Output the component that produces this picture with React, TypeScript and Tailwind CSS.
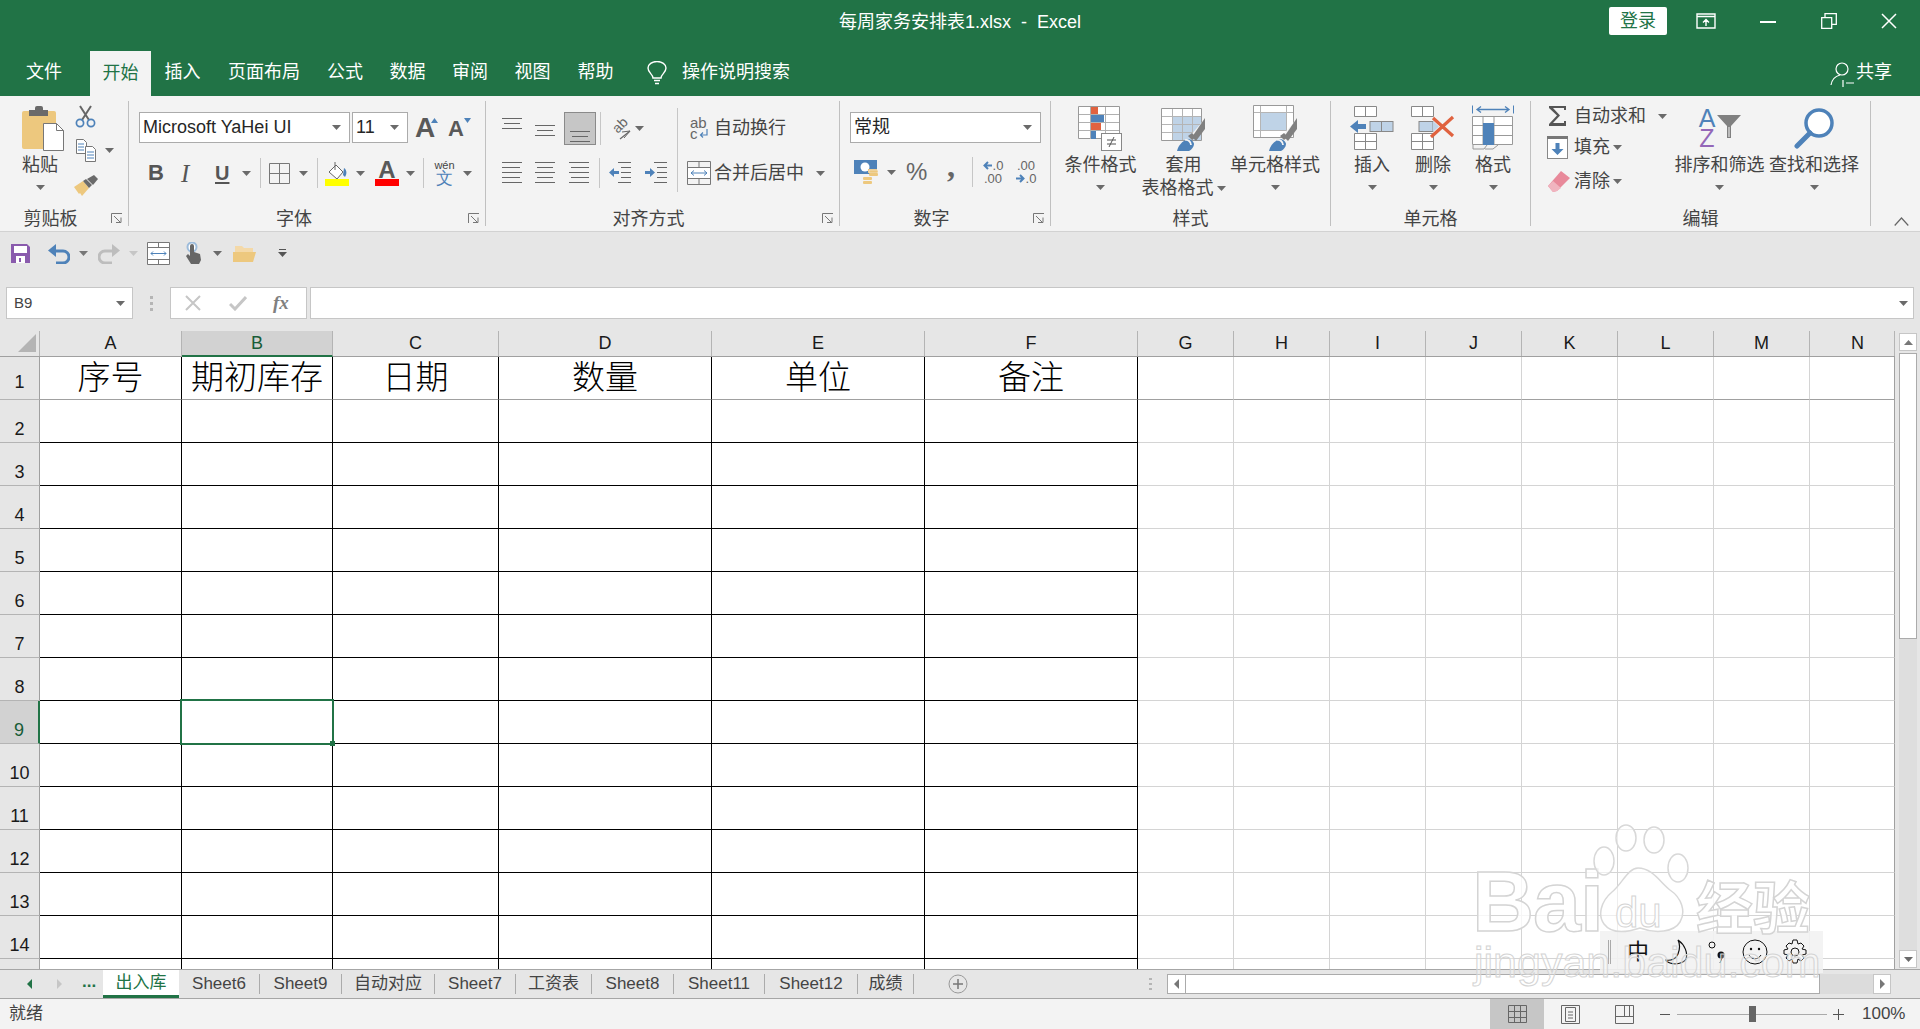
import React from 'react';

const S = ({ w, h, children, className = '' }: { w: number; h: number; children?: React.ReactNode; className?: string }) => (
  <svg width={w} height={h} viewBox={`0 0 ${w} ${h}`} className={`block shrink-0 ${className}`}>
    {children}
  </svg>
);

const Caret = ({ className = '' }: { className?: string }) => (
  <S w={9} h={5} className={className}>
    <path d="M0 0h9L4.5 5z" fill="#6a6a6a" />
  </S>
);

const Launcher = () => (
  <S w={12} h={11} className="absolute right-[5px] bottom-[2px]">
    <path d="M.5 10V.5H11M3 3l6 6M5 9.5h5v-5" fill="none" stroke="#777" />
  </S>
);

const Group = ({ className, label, lp = '', launcher = false, children }: { className: string; label: string; lp?: string; launcher?: boolean; children: React.ReactNode }) => (
  <div className={`relative flex h-[125px] shrink-0 flex-col border-r border-[#c0c0c0] ${className}`}>
    <div className="flex h-[105px]">{children}</div>
    <div className={`h-[20px] text-center text-[18px] leading-[26px] ${lp}`}>{label}</div>
    {launcher && <Launcher />}
  </div>
);

const Big = ({ className, icon, lines, inlineCaret = false }: { className: string; icon: React.ReactNode; lines: string[]; inlineCaret?: boolean }) => (
  <div className={`flex shrink-0 flex-col items-center pt-[5px] ${className}`}>
    <div className="flex h-[44px] items-center">{icon}</div>
    <div className="mt-[4px] whitespace-nowrap text-center text-[18px] leading-[23px]">
      {lines.map(l => (
        <div key={l} className="flex items-center justify-center gap-[3px]">
          {l}
          {inlineCaret && lines.length > 1 && l === lines[1] && <Caret />}
        </div>
      ))}
    </div>
    {!inlineCaret && <Caret className="mt-[8px]" />}
  </div>
);

const Combo = ({ className, text }: { className: string; text: string }) => (
  <div className={`flex h-[31px] shrink-0 items-center justify-between border border-[#ababab] bg-white pl-[3px] pr-[8px] text-[18px] text-[#262626] ${className}`}>
    <span className="whitespace-nowrap">{text}</span>
    <Caret />
  </div>
);

const VSep = ({ className = '' }: { className?: string }) => <div className={`w-px shrink-0 bg-[#c6c6c6] ${className}`} />;

const Lines = ({ rows, y0, step, x0 = 0, w = 20, h = 28 }: { rows: number[]; y0: number; step: number; x0?: number; w?: number; h?: number }) => (
  <S w={w} h={h}>
    {rows.map((r, i) => {
      const x = x0 === -1 ? (w - r) / 2 : x0 === -2 ? w - r : x0;
      return <rect key={i} x={x} y={y0 + i * step} width={r} height={1} fill="#666" />;
    })}
  </S>
);

const PasteIcon = () => (
  <S w={43} h={45} className="ml-[6px]">
    <rect x="0" y="5" width="34" height="38" rx="2" fill="#edc87e" />
    <rect x="7" y="4" width="19" height="6" fill="#6a6a6a" />
    <rect x="13" y="0" width="8" height="7" rx="2" fill="#6a6a6a" />
    <path d="M21.500 17.500h13l7 7v20h-20z" fill="#fff" stroke="#777" />
    <path d="M34.500 17.500v7h7" fill="none" stroke="#777" />
  </S>
);
const CutIcon = () => (
  <S w={21} h={23}>
    <path d="M7 15L16 1M14 15L5 1" stroke="#666" strokeWidth="2" />
    <circle cx="5" cy="18" r="3.600" fill="none" stroke="#4e82b9" strokeWidth="1.700" />
    <circle cx="16" cy="18" r="3.600" fill="none" stroke="#4e82b9" strokeWidth="1.700" />
  </S>
);
const CopyIcon = () => (
  <S w={20} h={23}>
    <path d="M.5.5h7l3 3v11H.5z" fill="#fff" stroke="#777" />
    <path d="M2 5h6M2 8h6M2 11h6" stroke="#4e82b9" />
    <path d="M9.500 7.500h7l3 3v12h-10z" fill="#fff" stroke="#777" />
    <path d="M11 13h7M11 16h7M11 19h7" stroke="#4e82b9" />
  </S>
);
const BrushIcon = () => (
  <S w={24} h={21}>
    <path d="M0 12l9-6 6 7-7 8-2-3-1 1z" fill="#edc87e" />
    <path d="M9 6l3-2 6 6-3 3z" fill="#6a6a6a" />
    <path d="M13 4l7-4 4 4-5 6z" fill="#6a6a6a" />
  </S>
);
const BorderIcon = () => (
  <S w={21} h={21}>
    <path d="M.5.5h20v20H.5zM10.500 1v19M1 10.500h19" fill="none" stroke="#777" />
  </S>
);
const FillIcon = () => (
  <S w={24} h={25}>
    <path d="M4 11l7-7 7 7-6 7z" fill="#fff" stroke="#666" />
    <path d="M10 1v8" stroke="#666" />
    <path d="M19 7c3 2 3 6 1 9l-2-2z" fill="#4e82b9" />
    <rect x="0" y="18" width="24" height="7" fill="#ffff00" />
  </S>
);
const FontColorIcon = () => (
  <div className="flex w-[24px] shrink-0 flex-col items-center">
    <span className="h-[18px] font-['Liberation_Sans'] text-[24px] font-bold leading-[20px] text-[#595959]">A</span>
    <div className="mt-[1px] h-[7px] w-[24px] bg-[#ff0000]" />
  </div>
);
const WenIcon = () => (
  <div className="flex w-[21px] shrink-0 flex-col items-center leading-none">
    <span className="text-[11px] text-[#444]">wén</span>
    <span className="mt-[-1px] text-[17px] text-[#4e82b9]">文</span>
  </div>
);
const OrientIcon = () => (
  <div className="relative h-[24px] w-[21px] shrink-0">
    <span className="absolute left-[1px] top-[0px] -rotate-45 font-['Liberation_Sans'] text-[14px] leading-[16px] text-[#666]">ab</span>
    <S w={21} h={24}>
      <path d="M9 22l10-8" stroke="#666" strokeWidth="1.300" />
      <path d="M13 21l6-7-8 1" fill="none" stroke="#666" />
    </S>
  </div>
);
const IndentDec = () => (
  <S w={22} h={22}>
    <path d="M9 .5h13M12 5.500h10M12 10.500h10M12 15.500h10M9 20.500h13" stroke="#666" />
    <path d="M0 10.500L5 6v3h5v3H5v3z" fill="#4e82b9" />
  </S>
);
const IndentInc = () => (
  <S w={22} h={22}>
    <path d="M9 .5h13M12 5.500h10M12 10.500h10M12 15.500h10M9 20.500h13" stroke="#666" />
    <path d="M10 10.500L5 6v3H0v3h5v3z" fill="#4e82b9" />
  </S>
);
const WrapIcon = () => (
  <div className="flex w-[18px] shrink-0 flex-col font-['Liberation_Sans'] text-[15px] leading-[11px] text-[#666]">
    <span>ab</span>
    <span className="flex items-center">
      c
      <S w={9} h={9} className="ml-[1px]">
        <path d="M8 0v6H2M4 3.500L1.500 6 4 8.500" fill="none" stroke="#4e82b9" strokeWidth="1.200" />
      </S>
    </span>
  </div>
);
const MergeIcon = () => (
  <S w={24} h={24}>
    <path d="M.5.5h23v23H.5zM1 6.500h22M1 17.500h22M12 1v5M12 18v5" fill="none" stroke="#777" />
    <rect x="1" y="7" width="22" height="10" fill="#fff" />
    <path d="M4 12h16M7 9.500L4 12l3 2.500M17 9.500l3 2.500-3 2.500" fill="none" stroke="#4e82b9" />
  </S>
);
const AccountIcon = () => (
  <S w={25} h={24}>
    <rect x="0" y="0" width="23" height="14" fill="#4e82b9" />
    <circle cx="11" cy="7" r="4.500" fill="#fff" />
    <rect x="14" y="9" width="9" height="4" fill="#e9c47f" />
    <rect x="15" y="10" width="9" height="3" rx="1" fill="#edc87e" stroke="#f3f3f3" strokeWidth=".5" />
    <rect x="15" y="13" width="9" height="3" rx="1" fill="#edc87e" />
    <rect x="9" y="17" width="9" height="3" rx="1" fill="#edc87e" />
    <rect x="9" y="21" width="9" height="3" rx="1" fill="#edc87e" />
  </S>
);
const DecArrow = ({ dir }: { dir: 'l' | 'r' }) => (
  <S w={9} h={9} className="mr-[1px]">
    <path d={dir === 'l' ? 'M9 4.500H2M5 1L1.500 4.500 5 8' : 'M0 4.500h7M4 1l3.500 3.500L4 8'} fill="none" stroke="#4e82b9" strokeWidth="2" />
  </S>
);
const CondIcon = () => (
  <S w={46} h={45}>
    <path d="M.5.5h41v32H.5z" fill="#fff" stroke="#999" />
    <rect x="12" y="1" width="8" height="8" fill="#e0623f" />
    <rect x="12" y="9" width="14" height="8" fill="#4e82b9" />
    <rect x="12" y="17" width="11" height="8" fill="#e0623f" />
    <rect x="12" y="25" width="6" height="8" fill="#4e82b9" />
    <path d="M12.500 1v32M27.500 1v32M1 8.500h40M1 16.500h40M1 24.500h40" stroke="#b0b0b0" fill="none" />
    <rect x="23.500" y="27.500" width="20" height="17" fill="#fff" stroke="#888" />
    <path d="M29 34h9M29 38h9M31 41l5-10" stroke="#555" fill="none" />
  </S>
);
const BrushOverlay = () => (
  <>
    <path d="M29 31l3 3 12-20v-1l-2 3z" fill="#f3f3f3" />
    <path d="M31 32l4 4 9-12V13z" fill="#808080" />
    <path d="M27 31l4-3 4 4-4 3z" fill="#808080" />
    <path d="M16 46c1-5 5-10 11-12 3 0 6 3 6 5 0 3-3 6-5 7z" fill="#4e82b9" />
    <path d="M24 35c3-1 6 2 6 5" fill="none" stroke="#f3f3f3" strokeWidth="1.800" />
  </>
);
const TableIcon = () => (
  <S w={45} h={46}>
    <path d="M.5 3.500h40v32H.5z" fill="#fff" stroke="#999" />
    <rect x="11" y="11" width="29" height="24" fill="#bfd3e7" />
    <path d="M11.500 4v31M21.500 4v31M31.500 4v31M1 11.500h39M1 19.500h39M1 27.500h39" stroke="#b5b5b5" fill="none" />
    <BrushOverlay />
  </S>
);
const CellStyleIcon = () => (
  <S w={45} h={46}>
    <path d="M.5.5h40v32H.5z" fill="#fff" stroke="#999" />
    <rect x="8" y="8" width="25" height="17" fill="#bfd3e7" />
    <path d="M7.500 1v31M33.500 1v31M1 7.500h39M1 25.500h39" stroke="#b5b5b5" fill="none" />
    <BrushOverlay />
  </S>
);
const InsertIcon = () => (
  <S w={44} h={44}>
    <path d="M4.500.5h22v10h-22zM15.500 1v9M4.500 27.500h22v16h-22zM15.500 28v15M5 35.500h21" fill="#fff" stroke="#888" />
    <rect x="20" y="15.500" width="23" height="10" fill="#bfd3e7" stroke="#888" />
    <path d="M31.500 16v9" stroke="#888" />
    <path d="M0 20.500L8 14v4h8v5H8v4z" fill="#4e82b9" />
  </S>
);
const DeleteIcon = () => (
  <S w={44} h={44}>
    <path d="M.5.5h22v10H.5zM11.500 1v9M.5 27.500h22v16H.5zM11.500 28v15M1 35.500h21" fill="#fff" stroke="#888" />
    <rect x="8" y="15.500" width="14" height="10" fill="#bfd3e7" stroke="#888" />
    <path d="M22 15l6 5.500-6 5.500z" fill="#bfd3e7" />
    <path d="M22 12l20 18M42 11L20 31" stroke="#e0623f" strokeWidth="3.200" />
  </S>
);
const FormatIcon = () => (
  <S w={42} h={46}>
    <path d="M.5.500v8M41.500.500v8" stroke="#4e82b9" />
    <path d="M5 4.500h32M9 1.500L5 4.500l4 3M33 1.500l4 3-4 3" fill="none" stroke="#4e82b9" strokeWidth="1.300" />
    <path d="M.5 11.500h40v28H.5zM11 12v28M22 12v28M1 20.500h39M1 30.500h39" fill="#fff" stroke="#999" />
    <rect x="11" y="18" width="11" height="22" fill="#4e82b9" />
    <path d="M1 40v4h11l3-4M13 44h8l5-4" fill="none" stroke="#999" />
  </S>
);
const SigmaIcon = () => (
  <S w={18} h={20}>
    <path d="M0 0h17v4h-2V2H4l7 7.500L4 17h11v-2h2v5H0v-2l8-8.500L0 2z" fill="#555" />
  </S>
);
const FillDownIcon = () => (
  <S w={21} h={23}>
    <rect x=".5" y=".5" width="20" height="22" fill="#fff" stroke="#888" />
    <rect x="0" y="0" width="21" height="3" fill="#777" />
    <path d="M10.500 19l-6-6h4V7h4v6h4z" fill="#4e82b9" />
  </S>
);
const EraserIcon = () => (
  <S w={22} h={21}>
    <path d="M0 15L13 0l9 7-13 13-4 1z" fill="#e8899a" />
    <path d="M0 15l5-5 8 7-4 3-4 1z" fill="#f0b4bf" />
  </S>
);
const SortIcon = () => (
  <div className="flex w-[43px] items-center">
    <div className="flex w-[18px] flex-col items-center font-['Liberation_Sans'] text-[25px] leading-[20px]">
      <span className="text-[#4e82b9]">A</span>
      <span className="text-[#9467b8]">Z</span>
    </div>
    <S w={24} h={24} className="ml-[1px] mt-[-2px]">
      <path d="M0 0h24L14 11v12h-4V11z" fill="#808080" />
      <path d="M11 12h2v10h-2z" fill="#bbb" />
    </S>
  </div>
);
const FindIcon = () => (
  <S w={41} h={41}>
    <circle cx="25" cy="15" r="13" fill="#fff" stroke="#4e82b9" strokeWidth="3.500" />
    <path d="M3 38l13-13" stroke="#4e82b9" strokeWidth="5" strokeLinecap="round" />
  </S>
);

const QuickBar = () => (
  <div className="flex h-[55px] shrink-0 items-center pb-[13px]">
    <S w={19} h={19} className="ml-[11px]">
      <path d="M0 0h16l3 3v16H0z" fill="#8a5bad" />
      <rect x="3" y="2" width="13" height="7" fill="#fff" />
      <rect x="5" y="12" width="9" height="7" fill="#fff" />
      <rect x="8" y="14" width="2" height="4" fill="#8a5bad" />
    </S>
    <S w={22} h={21} className="ml-[18px]">
      <path d="M6 8h9a6 6 0 0 1 0 12H8" fill="none" stroke="#4e82b9" strokeWidth="3" />
      <path d="M8 1L0 7.500 8 14z" fill="#4e82b9" />
    </S>
    <Caret className="ml-[9px] [&_path]:fill-[#777]" />
    <S w={22} h={21} className="ml-[10px]">
      <path d="M16 8H7a6 6 0 0 0 0 12h7" fill="none" stroke="#bdbdbd" strokeWidth="3" />
      <path d="M14 1l8 6.500-8 6.500z" fill="#bdbdbd" />
    </S>
    <S w={9} h={5} className="ml-[9px]"><path d="M0 0h9L4.500 5z" fill="#c6c6c6" /></S>
    <S w={23} h={23} className="ml-[9px]">
      <path d="M.5.500h22v22H.5zM1 5.500h21M1 17.500h21M11.500 1v4M11.500 18v4" fill="#fff" stroke="#777" />
      <path d="M4 11.500h15M6 9.500l-2 2 2 2M17 9.500l2 2-2 2" fill="none" stroke="#4e82b9" />
    </S>
    <S w={17} h={22} className="ml-[15px]">
      <circle cx="7" cy="5" r="4.500" fill="#fff" stroke="#9dbcdb" strokeWidth="2" />
      <path d="M5 4a2 2 0 0 1 4 0v6l6 2 1 6-2 4H6l-5-8 2-2 2 2z" fill="#666" />
    </S>
    <Caret className="ml-[11px]" />
    <S w={23} h={17} className="ml-[11px]">
      <path d="M2 1h7l2 2h9v4H2z" fill="#f4d9a8" />
      <path d="M0 7h23l-3 10H0z" fill="#edc87e" />
    </S>
    <S w={9} h={8} className="ml-[22px]">
      <path d="M1 .5h7" stroke="#555" />
      <path d="M0 3h9L4.500 8z" fill="#555" />
    </S>
  </div>
);

const FormulaBar = () => (
  <div className="flex h-[32px] shrink-0 items-stretch">
    <div className="ml-[6px] flex w-[127px] items-center justify-between border border-[#c6c6c6] bg-white pl-[7px] pr-[7px] text-[15px] text-[#444]">
      B9
      <Caret />
    </div>
    <div className="ml-[17px] flex w-[3px] flex-col justify-center gap-[3px]">
      <div className="h-[3px] w-[3px] bg-[#b5b5b5]" />
      <div className="h-[3px] w-[3px] bg-[#b5b5b5]" />
      <div className="h-[3px] w-[3px] bg-[#b5b5b5]" />
    </div>
    <div className="ml-[17px] flex w-[137px] items-center border border-[#c6c6c6] bg-white">
      <S w={16} h={16} className="ml-[14px]"><path d="M1 1l14 14M15 1L1 15" stroke="#c6c6c6" strokeWidth="2" /></S>
      <S w={18} h={15} className="ml-[28px]"><path d="M1 8l5 5L17 1" fill="none" stroke="#c6c6c6" strokeWidth="3" /></S>
      <span className="ml-[26px] font-['Liberation_Serif'] text-[19px] font-bold italic text-[#808080]">fx</span>
    </div>
    <div className="ml-[3px] flex mr-[6px] flex-1 items-center justify-end border border-[#c6c6c6] bg-white pr-[5px]">
      <Caret />
    </div>
  </div>
);

const colW = ['w-[142px]', 'w-[151px]', 'w-[166px]', 'w-[213px]', 'w-[213px]', 'w-[213px]', 'w-[96px]', 'w-[96px]', 'w-[96px]', 'w-[96px]', 'w-[96px]', 'w-[96px]', 'w-[96px]', 'w-[85px]'];
const colNames = ['A', 'B', 'C', 'D', 'E', 'F', 'G', 'H', 'I', 'J', 'K', 'L', 'M', 'N'];
const titles = ['序号', '期初库存', '日期', '数量', '单位', '备注'];

const Sheet = () => (
  <div className="flex min-h-0 flex-1 flex-col">
    <div className="flex h-[26px] shrink-0 border-b border-[#a0a0a0] font-['Liberation_Sans'] text-[18px] text-[#1a1a1a]">
      <div className="flex w-[40px] shrink-0 items-end justify-end border-r border-[#b4b4b4] pb-[4px] pr-[3px]">
        <S w={18} h={18}><path d="M18 0v18H0z" fill="#b4b4b4" /></S>
      </div>
      {colNames.map((c, i) => (
        <div
          key={c}
          className={`flex shrink-0 items-center justify-center border-r border-[#b4b4b4] ${colW[i]} ${i === 1 ? 'bg-[#d2d2d2] text-[#185c37] border-b-2 border-b-[#217346] h-[26px]' : ''} ${i === 13 ? 'pl-[11px]' : ''}`}
        >
          {c}
        </div>
      ))}
    </div>
    <div className="min-h-0 flex-1 overflow-hidden bg-white">
      {Array.from({ length: 15 }, (_, r) => (
        <div key={r} className="flex h-[43px]">
          <div className={`flex w-[40px] shrink-0 items-end justify-center border-b border-r font-['Liberation_Sans'] text-[18px] leading-[24px] ${r === 0 ? 'pb-[5px]' : 'pb-[1px]'} ${r === 8 ? 'border-b-[#b4b4b4] border-r-2 border-r-[#217346] bg-[#d2d2d2] text-[#185c37]' : 'border-b-[#b4b4b4] border-r-[#a0a0a0] bg-[#e6e6e6] text-[#1a1a1a]'}`}>
            {r + 1}
          </div>
          {colNames.map((c, i) => {
            const dark = i < 6;
            return (
              <div
                key={c}
                className={`relative flex shrink-0 items-center justify-center overflow-visible border-b border-r pb-[1px] text-[33px] font-light leading-none text-black ${colW[i]} ${dark ? 'border-r-black' : i === 13 ? 'border-r-[#a0a0a0]' : 'border-r-[#d4d4d4]'} ${r === 0 ? 'border-b-[#a0a0a0]' : dark ? 'border-b-black' : 'border-b-[#d4d4d4]'}`}
              >
                {r === 0 && i < 6 ? titles[i] : ''}
                {r === 8 && i === 1 && (
                  <div className="absolute left-[-2px] top-[-2px] z-10 h-[46px] w-[154px] border-2 border-[#217346]">
                    <div className="absolute bottom-[-3px] right-[-3px] h-[5px] w-[5px] bg-[#217346]" />
                  </div>
                )}
              </div>
            );
          })}
        </div>
      ))}
    </div>
  </div>
);

const VScroll = () => (
  <div className="flex w-[25px] shrink-0 flex-col items-center bg-[#e6e6e6] pl-[1px]">
    <div className="mt-[2px] flex h-[18px] w-[18px] items-center justify-center border border-[#c6c6c6] bg-white">
      <S w={9} h={5}><path d="M0 5h9L4.500 0z" fill="#777" /></S>
    </div>
    <div className="mt-[2px] h-[286px] w-[18px] border border-[#ababab] bg-white" />
    <div className="w-[18px] flex-1 bg-[#dedede]" />
    <div className="mb-[1px] flex h-[18px] w-[18px] items-center justify-center border border-[#c6c6c6] bg-white">
      <Caret />
    </div>
  </div>
);

const tabs = [
  ['出入库', 'w-[76px]'],
  ['Sheet6', 'w-[81px]'],
  ['Sheet9', 'w-[82px]'],
  ['自动对应', 'w-[93px]'],
  ['Sheet7', 'w-[81px]'],
  ['工资表', 'w-[76px]'],
  ['Sheet8', 'w-[82px]'],
  ['Sheet11', 'w-[91px]'],
  ['Sheet12', 'w-[93px]'],
  ['成绩', 'w-[56px]'],
];

const SheetTabs = () => (
  <div className="flex h-[30px] shrink-0 items-stretch border-y border-[#a6a6a6] text-[17px] text-[#444]">
    <div className="flex w-[103px] shrink-0 items-center pl-[27px]">
      <S w={5} h={10}><path d="M5 0v10L0 5z" fill="#217346" /></S>
      <S w={5} h={10} className="ml-[25px]"><path d="M0 0v10l5-5z" fill="#c6c6c6" /></S>
      <span className="ml-[20px] mt-[-6px] font-bold leading-none text-[#217346]">...</span>
    </div>
    {tabs.map(([t, w], i) =>
      i === 0 ? (
        <div key={t} className={`flex shrink-0 items-center justify-center border-b-[3px] border-b-[#217346] bg-white text-[#217346] ${w}`}>
          {t}
        </div>
      ) : (
        <div key={t} className={`my-[4px] flex shrink-0 items-center justify-center border-r border-[#ababab] ${w}`}>
          {t}
        </div>
      ),
    )}
    <div className="ml-[34px] flex items-center">
      <S w={20} h={20}>
        <circle cx="10" cy="10" r="9" fill="none" stroke="#999" />
        <path d="M10 5v10M5 10h10" stroke="#777" strokeWidth="1.500" />
      </S>
    </div>
    <div className="ml-[181px] flex w-[3px] flex-col justify-center gap-[3px]">
      <div className="h-[2px] w-[3px] bg-[#b5b5b5]" />
      <div className="h-[2px] w-[3px] bg-[#b5b5b5]" />
      <div className="h-[2px] w-[3px] bg-[#b5b5b5]" />
    </div>
    <div className="ml-[15px] my-[4px] flex w-[724px] items-stretch bg-[#dcdcdc]">
      <div className="flex w-[19px] items-center justify-center border border-[#ababab] bg-white">
        <S w={5} h={10}><path d="M5 0v10L0 5z" fill="#777" /></S>
      </div>
      <div className="w-[634px] border-y border-r border-[#ababab] bg-white" />
      <div className="flex-1" />
      <div className="flex w-[18px] items-center justify-center border border-[#c6c6c6] bg-white">
        <S w={5} h={10}><path d="M0 0v10l5-5z" fill="#777" /></S>
      </div>
    </div>
  </div>
);

const StatusBar = () => (
  <div className="flex min-h-0 flex-1 items-center bg-[#f3f3f3] text-[17px] leading-[20px] text-[#444]">
    <span className="ml-[9px]">就绪</span>
    <div className="ml-auto flex h-full w-[54px] items-center justify-center bg-[#c6c6c6]">
      <S w={19} h={18}><path d="M.5.500h18v17H.5zM6.500 1v16M12.500 1v16M1 6.500h17M1 12.500h17" fill="none" stroke="#666" /></S>
    </div>
    <S w={19} h={19} className="ml-[17px]">
      <path d="M.5.500h18v18H.5z" fill="none" stroke="#666" />
      <path d="M4.500 2.500h10v14h-10zM7 7h5M7 10h5M7 13h5" fill="none" stroke="#666" />
    </S>
    <S w={19} h={19} className="ml-[35px]">
      <path d="M.5.500h18v18H.5zM.5 11.500h18M9.500 1v10M14.500 1v10" fill="none" stroke="#666" />
    </S>
    <div className="ml-[26px] h-px w-[10px] shrink-0 bg-[#555]" />
    <div className="relative ml-[7px] h-px w-[150px] shrink-0 bg-[#aaa]">
      <div className="absolute left-[72px] top-[-8px] h-[16px] w-[7px] bg-[#666]" />
    </div>
    <S w={11} h={11} className="ml-[6px]"><path d="M0 5.500h11M5.500 0v11" stroke="#555" /></S>
    <span className="ml-[18px] mr-[15px] w-[43px] whitespace-nowrap font-['Liberation_Sans']">100%</span>
  </div>
);

const Watermark = () => (
  <div className="pointer-events-none absolute left-[1470px] top-[822px] z-30 h-[170px] w-[350px] font-['Liberation_Sans'] text-white/80 [-webkit-text-stroke:1.500px_#d4d4d4]">
    <span className="absolute left-[2px] top-[36px] text-[86px] font-bold leading-none tracking-[-1px]">Bai</span>
    <S w={104} h={112} className="absolute left-[120px] top-[2px]">
      <g fill="#fff" fillOpacity=".6" stroke="#d8d8d8" strokeWidth="1.500">
        <ellipse cx="36" cy="14" rx="10" ry="13" />
        <ellipse cx="64" cy="16" rx="10" ry="13" />
        <ellipse cx="14" cy="37" rx="10" ry="14" />
        <ellipse cx="88" cy="44" rx="10" ry="14" />
        <path d="M48 44c-10 0-16 16-26 24-12 10-14 24-8 32s18 10 36 4c16 6 34 4 40-6s2-24-10-32c-10-8-18-22-32-22z" />
      </g>
    </S>
    <span className="absolute left-[145px] top-[70px] text-[42px] leading-none [-webkit-text-stroke:1px_#d4d4d4]">du</span>
    <span className="absolute left-[226px] top-[54px] font-['Noto_Sans_CJK_SC'] text-[57px] font-bold leading-none">经验</span>
    <span className="absolute left-[4px] top-[119px] text-[43px] leading-none text-white/30 [-webkit-text-stroke:1px_#d4d4d4]">jingyan.baidu.com</span>
  </div>
);

const ImeBar = () => (
  <div className="absolute left-[1600px] top-[931px] z-20 flex h-[42px] w-[223px] items-center bg-[#f2f2f2]/90 text-[#111]">
    <div className="ml-[8px] h-[24px] w-[3px] border-x border-[#aaa]" />
    <span className="ml-[16px] w-[22px] text-[22px] leading-none text-[#111]">中</span>
    <S w={24} h={26} className="ml-[16px]">
      <path d="M13 1c7 5 10 13 8 19-2 4-10 6-16 4-3-1-4-2-4-3 5 1 10-1 12-6 2-5 2-10 0-14z" fill="none" stroke="#111" strokeWidth="1.200" />
    </S>
    <S w={18} h={26} className="ml-[18px]">
      <circle cx="5" cy="6" r="3" fill="none" stroke="#111" />
      <circle cx="14" cy="16" r="3.500" fill="#111" />
      <path d="M15 19l-2 5" stroke="#111" />
    </S>
    <S w={26} h={26} className="ml-[17px]">
      <circle cx="13" cy="13" r="12" fill="none" stroke="#111" />
      <circle cx="9" cy="10" r="1.200" fill="#111" />
      <circle cx="17" cy="10" r="1.200" fill="#111" />
      <path d="M7 16c3 5 9 5 12 0" fill="none" stroke="#111" />
    </S>
    <S w={26} h={26} className="ml-[14px]">
      <circle cx="13" cy="13" r="4" fill="none" stroke="#111" />
      <path d="M11 1h4l1 4 3-1 3 3-2 3 4 1v4l-4 1 2 3-3 3-3-2-1 4h-4l-1-4-3 2-3-3 2-3-4-1v-4l4-1-2-3 3-3 3 1z" fill="none" stroke="#111" />
    </S>
  </div>
);

export default function App() {
  return (
    <div className="relative flex h-[1029px] w-[1920px] flex-col overflow-hidden bg-[#e6e6e6] font-['Liberation_Sans','Noto_Sans_CJK_SC',sans-serif] text-[#444]">
      {/* title bar */}
      <div className="flex h-[48px] shrink-0 items-start bg-[#217346] text-white">
        <div className="flex-1" />
        <div className="mt-[9px] w-[400px] whitespace-pre text-center text-[18px] leading-[27px]">每周家务安排表1.xlsx  -  Excel</div>
        <div className="flex flex-1 items-start justify-end">
          <div className="mt-[7px] flex h-[28px] w-[58px] items-center justify-center rounded-[2px] bg-white text-[18px] text-[#217346]">登录</div>
          <S w={20} h={16} className="ml-[29px] mt-[13px]">
            <path d="M1 1h18v14H1zM1 3.500h18M10 13V7M7 9.500l3-3 3 3" fill="none" stroke="#fff" strokeWidth="1.400" />
          </S>
          <S w={16} h={2} className="ml-[44px] mt-[21px]"><rect width="16" height="2" fill="#fff" /></S>
          <S w={16} h={16} className="ml-[45px] mt-[13px]">
            <path d="M.7 4.700h10v10.600H.7zM4 4.500V.7h11.300v10.600h-4" fill="none" stroke="#fff" strokeWidth="1.300" />
          </S>
          <S w={16} h={16} className="ml-[44px] mr-[23px] mt-[13px]">
            <path d="M1 1l14 14M15 1L1 15" stroke="#fff" strokeWidth="1.500" />
          </S>
        </div>
      </div>

      {/* menu tabs */}
      <div className="flex h-[48px] shrink-0 bg-[#217346] pl-[13px] pt-[1px] text-[18px] text-white">
        <div className="mr-[15px] flex h-full w-[62px] items-center justify-center">文件</div>
        <div className="mt-[2px] flex h-[45px] w-[61px] items-center justify-center bg-[#f3f3f3] text-[#217346]">开始</div>
        <div className="flex w-[63px] items-center justify-center">插入</div>
        <div className="flex w-[100px] items-center justify-center">页面布局</div>
        <div className="flex w-[62px] items-center justify-center">公式</div>
        <div className="flex w-[63px] items-center justify-center">数据</div>
        <div className="flex w-[62px] items-center justify-center">审阅</div>
        <div className="flex w-[63px] items-center justify-center">视图</div>
        <div className="flex w-[63px] items-center justify-center">帮助</div>
        <S w={20} h={24} className="ml-[20px] mt-[12px]">
          <path d="M6 17c0-4-5-5-5-10a9 6.500 0 0 1 18 0c0 5-5 6-5 10zM7 19.500h6M8 22.500h4" fill="none" stroke="#fff" strokeWidth="1.400" />
        </S>
        <div className="ml-[15px] flex items-center whitespace-nowrap">操作说明搜索</div>
        <div className="ml-auto mr-[28px] flex items-center">
          <S w={24} h={26} className="mt-[3px]">
            <circle cx="12" cy="8" r="6" fill="none" stroke="#fff" strokeWidth="1.200" />
            <path d="M1 24c1-6 5-9 9-10M13 19v7M16 22h8" fill="none" stroke="#fff" strokeWidth="1.200" />
          </S>
          <span className="ml-[2px]">共享</span>
        </div>
      </div>

      {/* ribbon */}
      <div className="relative flex h-[136px] shrink-0 border-b border-[#d2d2d2] bg-[#f3f3f3] pt-[5px] text-[18px] text-[#444]">
        <Group className="w-[129px]" label="剪贴板" lp="pr-[27px]" launcher>
          <Big className="ml-[15px] w-[50px]" icon={<PasteIcon />} lines={['粘贴']} />
          <div className="ml-[10px] flex flex-col">
            <div className="mt-[4px]"><CutIcon /></div>
            <div className="ml-[1px] mt-[11px] flex items-center gap-[9px]">
              <CopyIcon />
              <Caret />
            </div>
            <div className="ml-[-1px] mt-[13px]"><BrushIcon /></div>
          </div>
        </Group>

        <Group className="w-[357px]" label="字体" lp="pr-[26px]" launcher>
          <div className="flex flex-col">
            <div className="ml-[10px] mt-[11px] flex h-[31px] items-center">
              <Combo className="w-[211px]" text="Microsoft YaHei UI" />
              <Combo className="ml-[2px] w-[56px]" text="11" />
              <div className="ml-[7px] flex w-[21px] items-start">
                <span className="font-['Liberation_Sans'] text-[28px] font-bold leading-none text-[#595959]">A</span>
              </div>
              <S w={7} h={5} className="ml-[-5px] mt-[-14px]"><path d="M0 5h7L3.500 0z" fill="#4e82b9" /></S>
              <div className="ml-[10px] flex w-[16px] items-start pt-[3px]">
                <span className="font-['Liberation_Sans'] text-[22px] font-bold leading-none text-[#595959]">A</span>
              </div>
              <S w={7} h={5} className="mt-[-14px]"><path d="M0 0h7L3.500 5z" fill="#4e82b9" /></S>
            </div>
            <div className="mt-[15px] flex h-[30px] items-center font-['Liberation_Sans'] text-[#555]">
              <span className="ml-[19px] w-[14px] text-[22px] font-bold leading-none">B</span>
              <span className="ml-[19px] w-[15px] font-['Liberation_Serif'] text-[25px] italic leading-none">I</span>
              <span className="ml-[19px] w-[15px] text-[20px] font-bold leading-none underline underline-offset-2">U</span>
              <Caret className="ml-[12px]" />
              <VSep className="ml-[9px] h-[30px]" />
              <div className="ml-[8px]"><BorderIcon /></div>
              <Caret className="ml-[9px]" />
              <VSep className="ml-[9px] h-[30px]" />
              <div className="ml-[7px]"><FillIcon /></div>
              <Caret className="ml-[7px]" />
              <div className="ml-[10px]"><FontColorIcon /></div>
              <Caret className="ml-[7px]" />
              <VSep className="ml-[8px] h-[30px]" />
              <div className="ml-[10px]"><WenIcon /></div>
              <Caret className="ml-[8px]" />
            </div>
          </div>
        </Group>

        <Group className="w-[354px]" label="对齐方式" lp="pr-[28px]" launcher>
          <div className="flex w-[191px] shrink-0 flex-col border-r-0">
            <div className="mt-[11px] flex h-[33px] items-center">
              <div className="ml-[16px]"><Lines rows={[20, 16, 20]} y0={3} step={5} x0={-1} h={28} /></div>
              <div className="ml-[13px]"><Lines rows={[20, 16, 20]} y0={10} step={5} x0={-1} h={28} /></div>
              <div className="ml-[9px] flex h-[33px] w-[32px] shrink-0 items-center justify-center border border-[#8a8a8a] bg-[#c6c6c6]">
                <Lines rows={[20, 16, 20]} y0={16} step={5} x0={-1} h={28} />
              </div>
              <VSep className="ml-[4px] h-[33px]" />
              <div className="ml-[10px]"><OrientIcon /></div>
              <Caret className="ml-[3px]" />
            </div>
            <div className="mt-[17px] flex h-[22px] items-center">
              <div className="ml-[16px]"><Lines rows={[20, 18, 20, 18, 20]} y0={0} step={5} h={22} /></div>
              <div className="ml-[13px]"><Lines rows={[20, 16, 20, 16, 20]} y0={0} step={5} x0={-1} h={22} /></div>
              <div className="ml-[14px]"><Lines rows={[20, 18, 20, 18, 20]} y0={0} step={5} x0={-2} h={22} /></div>
              <VSep className="ml-[10px] h-[30px]" />
              <div className="ml-[9px]"><IndentDec /></div>
              <div className="ml-[14px]"><IndentInc /></div>
            </div>
          </div>
          <VSep className="mt-[7px] h-[84px]" />
          <div className="flex flex-col">
            <div className="ml-[12px] mt-[15px] flex h-[24px] items-center">
              <WrapIcon />
              <span className="ml-[6px] whitespace-nowrap">自动换行</span>
            </div>
            <div className="ml-[9px] mt-[21px] flex h-[24px] items-center">
              <MergeIcon />
              <span className="ml-[3px] whitespace-nowrap">合并后居中</span>
              <Caret className="ml-[12px]" />
            </div>
          </div>
        </Group>

        <Group className="w-[211px]" label="数字" lp="pr-[27px]" launcher>
          <div className="flex flex-col">
            <Combo className="ml-[10px] mt-[11px] w-[191px]" text="常规" />
            <div className="mt-[17px] flex h-[24px] items-center text-[#666]">
              <div className="ml-[14px]"><AccountIcon /></div>
              <Caret className="ml-[8px]" />
              <span className="ml-[10px] w-[22px] font-['Liberation_Sans'] text-[24px] leading-none">%</span>
              <span className="ml-[19px] mt-[-12px] w-[12px] font-['Liberation_Serif'] text-[32px] font-bold leading-none">,</span>
              <VSep className="ml-[13px] h-[30px]" />
              <div className="ml-[9px] flex w-[22px] flex-col items-center font-['Liberation_Sans'] text-[13px] leading-[13px]">
                <span className="flex items-center"><DecArrow dir="l" />.0</span>
                <span>.00</span>
              </div>
              <div className="ml-[11px] flex w-[22px] flex-col items-center font-['Liberation_Sans'] text-[13px] leading-[13px]">
                <span>.00</span>
                <span className="flex items-center"><DecArrow dir="r" />.0</span>
              </div>
            </div>
          </div>
        </Group>

        <Group className="w-[280px]" label="样式">
          <Big className="ml-[9px] w-[81px]" icon={<CondIcon />} lines={['条件格式']} />
          <Big className="w-[85px]" icon={<TableIcon />} lines={['套用', '表格格式']} inlineCaret />
          <Big className="ml-[2px] w-[94px]" icon={<CellStyleIcon />} lines={['单元格样式']} />
        </Group>

        <Group className="w-[200px]" label="单元格">
          <Big className="ml-[11px] w-[60px]" icon={<InsertIcon />} lines={['插入']} />
          <Big className="ml-[1px] w-[60px]" icon={<DeleteIcon />} lines={['删除']} />
          <Big className="w-[60px]" icon={<FormatIcon />} lines={['格式']} />
        </Group>

        <Group className="w-[340px]" label="编辑">
          <div className="ml-[16px] flex w-[127px] shrink-0 flex-col">
            <div className="flex h-[30px] items-center">
              <div className="ml-[2px]"><SigmaIcon /></div>
              <span className="ml-[7px] whitespace-nowrap">自动求和</span>
              <Caret className="ml-[12px]" />
            </div>
            <div className="flex h-[32px] items-center">
              <FillDownIcon />
              <span className="ml-[6px] whitespace-nowrap">填充</span>
              <Caret className="ml-[3px]" />
            </div>
            <div className="flex h-[36px] items-center">
              <div className="ml-[1px]"><EraserIcon /></div>
              <span className="ml-[4px] whitespace-nowrap">清除</span>
              <Caret className="ml-[3px]" />
            </div>
          </div>
          <Big className="w-[91px]" icon={<SortIcon />} lines={['排序和筛选']} />
          <Big className="ml-[4px] w-[90px]" icon={<FindIcon />} lines={['查找和选择']} />
        </Group>

        <S w={15} h={9} className="absolute right-[11px] top-[121px]">
          <path d="M.7 8.500L7.500 1l6.800 7.500" fill="none" stroke="#666" strokeWidth="1.200" />
        </S>
      </div>

      <QuickBar />
      <FormulaBar />

      <div className="mt-[12px] flex h-[638px] shrink-0">
        <Sheet />
        <VScroll />
      </div>

      <SheetTabs />
      <StatusBar />
      <Watermark />
      <ImeBar />
    </div>
  );
}
